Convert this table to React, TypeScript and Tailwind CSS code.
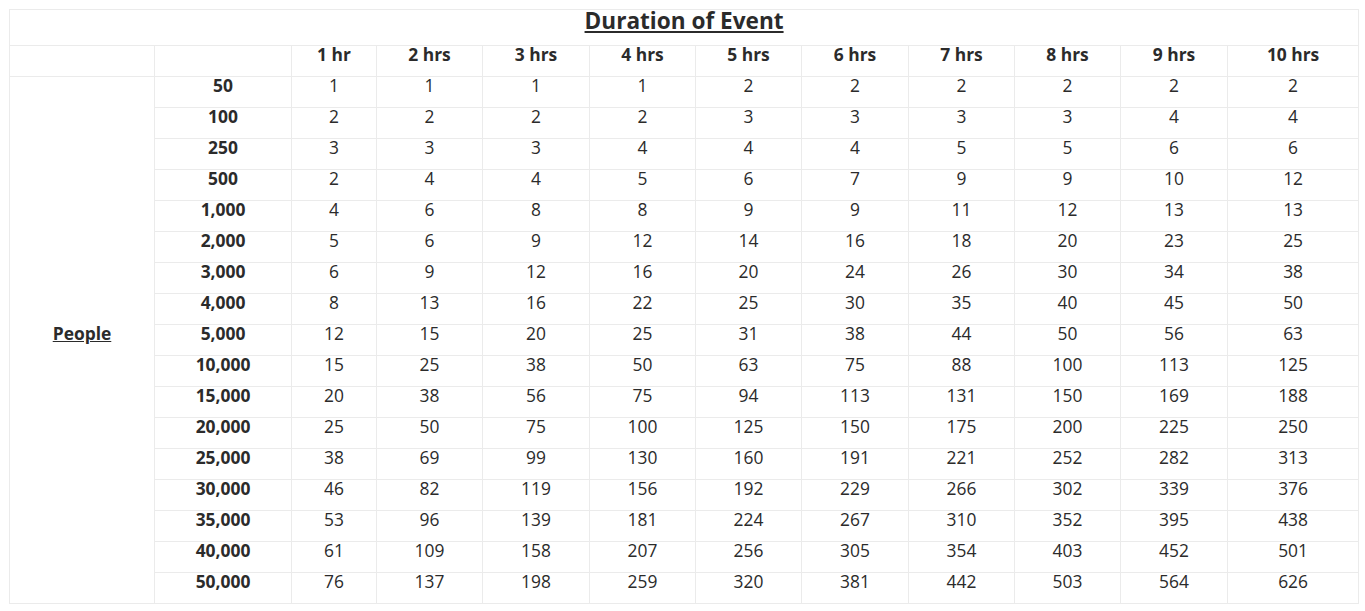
import React from "react";

const hours = ["1 hr", "2 hrs", "3 hrs", "4 hrs", "5 hrs", "6 hrs", "7 hrs", "8 hrs", "9 hrs", "10 hrs"];

const rows: [string, number[]][] = [
  ["50", [1, 1, 1, 1, 2, 2, 2, 2, 2, 2]],
  ["100", [2, 2, 2, 2, 3, 3, 3, 3, 4, 4]],
  ["250", [3, 3, 3, 4, 4, 4, 5, 5, 6, 6]],
  ["500", [2, 4, 4, 5, 6, 7, 9, 9, 10, 12]],
  ["1,000", [4, 6, 8, 8, 9, 9, 11, 12, 13, 13]],
  ["2,000", [5, 6, 9, 12, 14, 16, 18, 20, 23, 25]],
  ["3,000", [6, 9, 12, 16, 20, 24, 26, 30, 34, 38]],
  ["4,000", [8, 13, 16, 22, 25, 30, 35, 40, 45, 50]],
  ["5,000", [12, 15, 20, 25, 31, 38, 44, 50, 56, 63]],
  ["10,000", [15, 25, 38, 50, 63, 75, 88, 100, 113, 125]],
  ["15,000", [20, 38, 56, 75, 94, 113, 131, 150, 169, 188]],
  ["20,000", [25, 50, 75, 100, 125, 150, 175, 200, 225, 250]],
  ["25,000", [38, 69, 99, 130, 160, 191, 221, 252, 282, 313]],
  ["30,000", [46, 82, 119, 156, 192, 229, 266, 302, 339, 376]],
  ["35,000", [53, 96, 139, 181, 224, 267, 310, 352, 395, 438]],
  ["40,000", [61, 109, 158, 207, 256, 305, 354, 403, 452, 501]],
  ["50,000", [76, 137, 198, 259, 320, 381, 442, 503, 564, 626]],
];

const widths = [145, 137, 85, 106, 107, 106, 106, 107, 106, 106, 107, 131];

const cell = "border border-[#ebebeb] text-center align-middle p-0 pb-[14px] leading-[16px]";

export default function App() {
  return (
    <div className="bg-white min-h-[611px] pt-[9px] pl-[9px] text-[#2b2b2b] font-['Open_Sans',sans-serif] text-[17.4px]">
      <table className="table-fixed border-collapse w-[1349px]">
        <colgroup>
          {widths.map((w, i) => (
            <col key={i} style={{ width: w }} />
          ))}
        </colgroup>
        <tbody>
          <tr>
            <td colSpan={12} className="border border-[#ebebeb] text-center align-middle p-0 pb-[13px] leading-[22px] text-[22.6px] font-bold underline">
              Duration of Event
            </td>
          </tr>
          <tr>
            <td className={cell}></td>
            <td className={cell}></td>
            {hours.map((h) => (
              <td key={h} className={cell + " font-bold"}>
                {h}
              </td>
            ))}
          </tr>
          {rows.map(([label, vals], i) => (
            <tr key={label}>
              {i === 0 && (
                <td rowSpan={rows.length} className={cell + " font-bold underline"}>
                  People
                </td>
              )}
              <td className={cell + " font-bold"}>{label}</td>
              {vals.map((v, j) => (
                <td key={j} className={cell}>
                  {v}
                </td>
              ))}
            </tr>
          ))}
        </tbody>
      </table>
    </div>
  );
}
